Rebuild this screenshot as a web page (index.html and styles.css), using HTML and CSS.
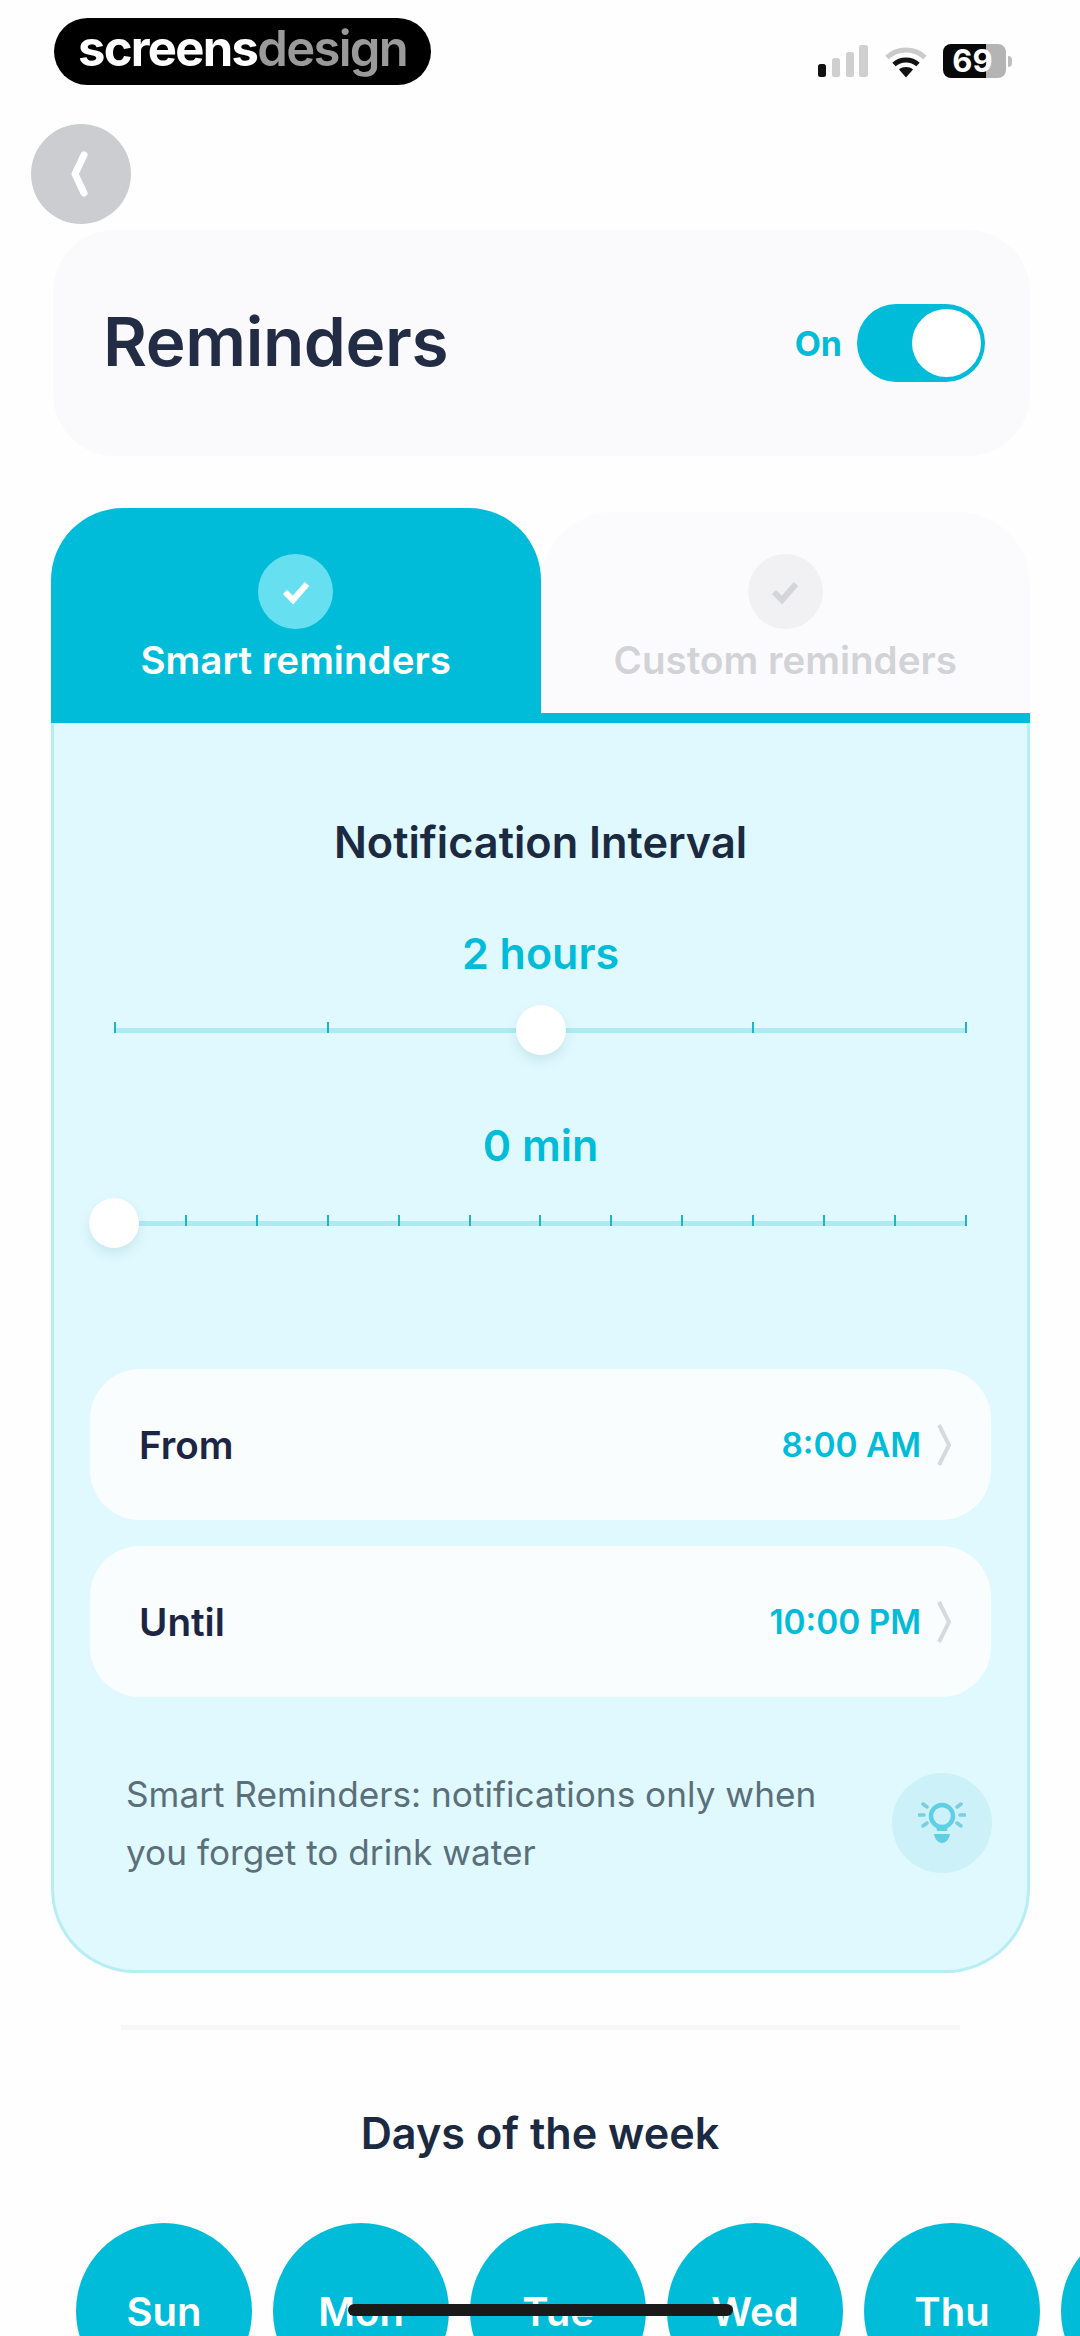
FILE: index.html
```html
<!DOCTYPE html>
<html lang="en">
<head>
<meta charset="utf-8">
<title>Reminders</title>
<link rel="stylesheet" href="styles.css">
</head>
<body>
<div class="page">
  <div class="top">
    <div class="logo"><span class="logo-a">screens</span><span class="logo-b">design</span></div>
    <div class="status">
      <svg class="signal" width="50" height="32" viewBox="0 0 50 32">
        <rect x="0" y="19" width="8" height="13" rx="2.5" fill="#111"/>
        <rect x="14" y="13" width="8" height="19" rx="2.5" fill="#cfcfcf"/>
        <rect x="28" y="7" width="8" height="25" rx="2.5" fill="#cfcfcf"/>
        <rect x="41" y="0" width="9" height="32" rx="2.5" fill="#cfcfcf"/>
      </svg>
      <svg class="wifi" width="42" height="32" viewBox="0 0 42 32">
        <path d="M2 11.5C12.5 1.5 29.5 1.5 40 11.5" fill="none" stroke="#cbcbcb" stroke-width="5"/>
        <path d="M9 18.5C15.5 12.5 26.5 12.5 33 18.5" fill="none" stroke="#111" stroke-width="5"/>
        <path d="M14 23.5C18 20.3 24 20.3 28 23.5L21 31.5Z" fill="#111"/>
      </svg>
      <div class="battery">69</div>
    </div>
  </div>

  <div class="back">
    <svg width="20" height="48" viewBox="0 0 20 48"><path d="M15 5L6 24L15 43" fill="none" stroke="#fff" stroke-width="7" stroke-linecap="round" stroke-linejoin="round"/></svg>
  </div>

  <section class="head-card">
    <h1 class="title">Reminders</h1>
    <div class="switch-wrap">
      <span class="on">On</span>
      <div class="switch"><div class="knob"></div></div>
    </div>
  </section>

  <div class="tabs">
    <div class="tab tab-active">
      <div class="tick tick-active">
        <svg width="30" height="26" viewBox="0 0 30 26"><path d="M4 13L12 21L26 5" fill="none" stroke="#fff" stroke-width="6"/></svg>
      </div>
      <div class="tab-label">Smart reminders</div>
    </div>
    <div class="tab tab-idle">
      <div class="tick tick-idle">
        <svg width="30" height="26" viewBox="0 0 30 26"><path d="M4 13L12 21L26 5" fill="none" stroke="#d4d5d8" stroke-width="6"/></svg>
      </div>
      <div class="tab-label">Custom reminders</div>
    </div>
  </div>

  <section class="panel">
    <div class="panel-title">Notification Interval</div>
    <div class="value value-first">2 hours</div>
    <div class="slider slider-first">
      <div class="track"></div>
      <div class="ticks"><i></i><i></i><i></i><i></i><i></i></div>
      <div class="thumb thumb-mid"></div>
    </div>
    <div class="value value-second">0 min</div>
    <div class="slider slider-second">
      <div class="track"></div>
      <div class="ticks"><i></i><i></i><i></i><i></i><i></i><i></i><i></i><i></i><i></i><i></i><i></i><i></i><i></i></div>
      <div class="thumb thumb-start"></div>
    </div>

    <div class="row row-first">
      <span class="row-label">From</span>
      <span class="row-value">8:00 AM</span>
      <svg class="chev" width="16" height="44" viewBox="0 0 16 44"><path d="M3 2L13 22L3 42" fill="none" stroke="#d6dadc" stroke-width="4"/></svg>
    </div>
    <div class="row row-second">
      <span class="row-label">Until</span>
      <span class="row-value">10:00 PM</span>
      <svg class="chev" width="16" height="44" viewBox="0 0 16 44"><path d="M3 2L13 22L3 42" fill="none" stroke="#d6dadc" stroke-width="4"/></svg>
    </div>

    <div class="hint">
      <p class="hint-text">Smart Reminders: notifications only when you forget to drink water</p>
      <div class="bulb">
        <svg width="48" height="44" viewBox="0 0 48 44">
          <circle cx="24" cy="15" r="11" fill="none" stroke="#5fd0e4" stroke-width="4.5"/>
          <path d="M18 25L19 30H29L30 25Z" fill="#5fd0e4"/>
          <path d="M16 33H32C31 38.5 28 42 24 42C20 42 17 38.5 16 33Z" fill="#5fd0e4"/>
          <path d="M5 3L9 6M43 3L39 6M1 14H6M47 14H42M5 25L9 22M43 25L39 22" stroke="#78cfe0" stroke-width="3.5" stroke-linecap="round"/>
        </svg>
      </div>
    </div>
  </section>

  <div class="divider"></div>
  <div class="days-title">Days of the week</div>
  <div class="days">
    <div class="day">Sun</div>
    <div class="day">Mon</div>
    <div class="day">Tue</div>
    <div class="day">Wed</div>
    <div class="day">Thu</div>
    <div class="day day-last"></div>
  </div>
  <div class="home-bar"></div>
</div>
</body>
</html>
```

FILE: styles.css
```css
* { box-sizing: border-box; }
html, body { margin: 0; padding: 0; background: #fefefe; }
body { font-family: "Inter", "Liberation Sans", sans-serif; }
.page {
  position: relative;
  width: 1080px;
  height: 2336px;
  overflow: hidden;
  background: #fefefe;
  display: flex;
  flex-direction: column;
}

/* status row */
.top {
  display: flex;
  justify-content: space-between;
  align-items: flex-start;
  padding: 18px 74px 0 54px;
  height: 85px;
  flex: none;
}
.logo {
  width: 377px;
  height: 67px;
  border-radius: 34px;
  background: #000;
  display: flex;
  justify-content: center;
  align-items: center;
  padding-bottom: 6px;
  font-size: 49px;
  font-weight: 700;
  letter-spacing: -1.7px;
  line-height: 1;
}
.logo-a { color: #fff; }
.logo-b { color: #9a9a9a; font-weight: 600; }
.status {
  display: flex;
  align-items: flex-start;
}
.signal { margin-top: 27px; }
.wifi { margin: 28px 0 0 17px; }
.battery {
  position: relative;
  width: 63px;
  height: 34px;
  margin: 26px 0 0 16px;
  border-radius: 8px;
  background: linear-gradient(90deg, #080808 0 68%, #b4b4b4 68% 100%);
  color: #fff;
  font-size: 31px;
  font-weight: 700;
  line-height: 34px;
  text-align: center;
  padding-right: 4px;
}
.battery::after {
  content: "";
  position: absolute;
  left: 65px;
  top: 12px;
  width: 4px;
  height: 11px;
  border-radius: 0 5px 5px 0;
  background: #bdbdbd;
}

/* back */
.back {
  flex: none;
  width: 100px;
  height: 100px;
  margin: 39px 0 0 31px;
  border-radius: 50%;
  background: #cbcdd1;
  display: flex;
  align-items: center;
  justify-content: center;
  padding-right: 4px;
}

/* heading card */
.head-card {
  flex: none;
  height: 226px;
  margin: 6px 50px 0 53px;
  padding: 0 45px 0 50px;
  border-radius: 62px;
  background: #fafafd;
  display: flex;
  justify-content: space-between;
  align-items: center;
}
.title {
  margin: 0 0 2px;
  font-size: 67.5px;
  font-weight: 600;
  color: #232c45;
  line-height: 1;
  letter-spacing: -0.4px;
}
.switch-wrap { display: flex; align-items: center; gap: 15px; }
.on { font-size: 34px; font-weight: 700; color: #00bcd9; }
.switch {
  width: 128px;
  height: 78px;
  border-radius: 39px;
  background: #00bcd9;
  padding: 5px 4px;
  display: flex;
  justify-content: flex-end;
}
.knob { width: 69px; height: 68px; border-radius: 50%; background: #fff; }

/* tabs */
.tabs {
  flex: none;
  display: flex;
  align-items: flex-end;
  margin: 52px 50px 0 51px;
}
.tab {
  width: 50%;
  display: flex;
  flex-direction: column;
  align-items: center;
}
.tab-active {
  height: 215px;
  padding-top: 46px;
  background: #00bcd9;
  border-radius: 72px 72px 0 0;
  color: #fff;
}
.tab-idle {
  height: 211px;
  padding-top: 42px;
  background: #fbfbfd;
  border-radius: 72px 72px 0 0;
  border-bottom: 10px solid #00bcd9;
  color: #d2d3d7;
}
.tick {
  width: 75px;
  height: 75px;
  border-radius: 50%;
  display: flex;
  align-items: center;
  justify-content: center;
}
.tick-active { background: #66e0f0; }
.tick-idle { background: #f1f1f3; }
.tab-label {
  margin-top: 9px;
  font-size: 38.6px;
  font-weight: 600;
  line-height: 44px;
  white-space: nowrap;
}

/* panel */
.panel {
  flex: none;
  height: 1250px;
  margin: 0 50px 0 51px;
  padding-top: 89px;
  background: #e0f9fe;
  border: 3px solid #b5eef5;
  border-top: 0;
  border-radius: 0 0 84px 84px;
}
.panel-title {
  height: 60px;
  font-size: 43.3px;
  font-weight: 600;
  line-height: 60px;
  text-align: center;
  color: #1b2a41;
}
.value {
  height: 60px;
  font-size: 43px;
  font-weight: 600;
  line-height: 60px;
  text-align: center;
  color: #00bcd9;
}
.value-first { margin-top: 51px; }
.value-second { margin-top: 60px; }
.slider {
  position: relative;
  height: 50px;
  margin: 22px 60px 0;
}
.slider-second { margin-top: 23px; }
.track {
  position: absolute;
  left: 0;
  right: 0;
  top: 23px;
  height: 5px;
  background: #aeeaf2;
}
.ticks {
  position: absolute;
  left: 0;
  right: 0;
  top: 17px;
  display: flex;
  justify-content: space-between;
}
.ticks i { display: block; width: 2px; height: 11px; background: #1fb5c5; }
.thumb {
  position: absolute;
  top: 0;
  width: 50px;
  height: 50px;
  border-radius: 50%;
  background: #fff;
  box-shadow: 0 6px 12px rgba(40, 110, 130, 0.12);
}
.thumb-mid { left: calc(50% - 25px); }
.thumb-start { left: -25px; }

/* rows */
.row {
  height: 151px;
  margin: 0 36px;
  padding: 0 39px 0 49px;
  border-radius: 50px;
  background: #f9fdfe;
  display: flex;
  align-items: center;
}
.row-first { margin-top: 121px; }
.row-second { margin-top: 26px; }
.row-label { flex: 1; font-size: 38.6px; font-weight: 600; color: #1c2543; }
.row-value { font-size: 33.4px; font-weight: 600; color: #00bcd9; }
.chev { margin-left: 15px; }

/* hint */
.hint {
  display: flex;
  justify-content: space-between;
  align-items: flex-start;
  margin: 68px 35px 0 72px;
}
.hint-text {
  margin: 0;
  width: 730px;
  font-size: 35.2px;
  line-height: 58px;
  color: #5b6f7a;
}
.bulb {
  flex: none;
  width: 100px;
  height: 100px;
  margin-top: 8px;
  border-radius: 50%;
  background: #ccf1f8;
  display: flex;
  align-items: center;
  justify-content: center;
}

/* days */
.divider {
  flex: none;
  height: 5px;
  margin: 52px 120px 0 121px;
  background: #f7f7f7;
}
.days-title {
  flex: none;
  height: 60px;
  margin-top: 73px;
  font-size: 43.2px;
  font-weight: 600;
  line-height: 60px;
  text-align: center;
  color: #1b2a41;
}
.days {
  flex: none;
  display: flex;
  gap: 21px;
  margin-top: 60px;
  padding-left: 76px;
}
.day {
  flex: none;
  width: 176px;
  height: 176px;
  border-radius: 50%;
  background: #00bcd9;
  color: #fff;
  font-size: 40px;
  font-weight: 600;
  display: flex;
  align-items: center;
  justify-content: center;
}
.home-bar {
  position: absolute;
  left: 348px;
  top: 2304px;
  width: 385px;
  height: 12px;
  border-radius: 6px;
  background: #1a1a1a;
}
```
